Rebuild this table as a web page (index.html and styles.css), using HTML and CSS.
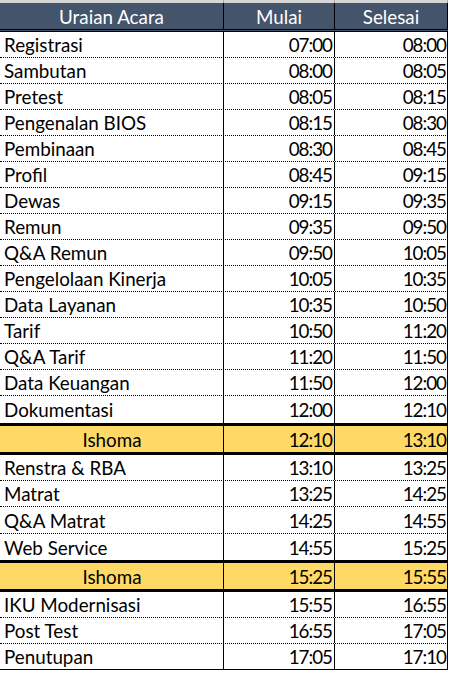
FILE: index.html
```html
<!DOCTYPE html>
<html>
<head>
<meta charset="utf-8">
<link rel="stylesheet" href="styles.css">
</head>
<body>
<div class="sheet">
  <div class="strip"><span></span><span></span><span></span></div>
  <div class="row head"><div class="c c1">Uraian Acara</div><div class="c c2">Mulai</div><div class="c c3">Selesai</div></div>
  <div class="row"><div class="c c1">Registrasi</div><div class="c c2">07:00</div><div class="c c3">08:00</div></div>
  <div class="row"><div class="c c1">Sambutan</div><div class="c c2">08:00</div><div class="c c3">08:05</div></div>
  <div class="row"><div class="c c1">Pretest</div><div class="c c2">08:05</div><div class="c c3">08:15</div></div>
  <div class="row"><div class="c c1">Pengenalan BIOS</div><div class="c c2">08:15</div><div class="c c3">08:30</div></div>
  <div class="row"><div class="c c1">Pembinaan</div><div class="c c2">08:30</div><div class="c c3">08:45</div></div>
  <div class="row"><div class="c c1">Profil</div><div class="c c2">08:45</div><div class="c c3">09:15</div></div>
  <div class="row"><div class="c c1">Dewas</div><div class="c c2">09:15</div><div class="c c3">09:35</div></div>
  <div class="row"><div class="c c1">Remun</div><div class="c c2">09:35</div><div class="c c3">09:50</div></div>
  <div class="row"><div class="c c1">Q&amp;A Remun</div><div class="c c2">09:50</div><div class="c c3">10:05</div></div>
  <div class="row"><div class="c c1">Pengelolaan Kinerja</div><div class="c c2">10:05</div><div class="c c3">10:35</div></div>
  <div class="row"><div class="c c1">Data Layanan</div><div class="c c2">10:35</div><div class="c c3">10:50</div></div>
  <div class="row"><div class="c c1">Tarif</div><div class="c c2">10:50</div><div class="c c3">11:20</div></div>
  <div class="row"><div class="c c1">Q&amp;A Tarif</div><div class="c c2">11:20</div><div class="c c3">11:50</div></div>
  <div class="row"><div class="c c1">Data Keuangan</div><div class="c c2">11:50</div><div class="c c3">12:00</div></div>
  <div class="row last tall"><div class="c c1">Dokumentasi</div><div class="c c2">12:00</div><div class="c c3">12:10</div></div>
  <div class="row brk"><div class="c c1">Ishoma</div><div class="c c2">12:10</div><div class="c c3">13:10</div></div>
  <div class="row"><div class="c c1">Renstra &amp; RBA</div><div class="c c2">13:10</div><div class="c c3">13:25</div></div>
  <div class="row"><div class="c c1">Matrat</div><div class="c c2">13:25</div><div class="c c3">14:25</div></div>
  <div class="row tall"><div class="c c1">Q&amp;A Matrat</div><div class="c c2">14:25</div><div class="c c3">14:55</div></div>
  <div class="row last"><div class="c c1">Web Service</div><div class="c c2">14:55</div><div class="c c3">15:25</div></div>
  <div class="row brk"><div class="c c1">Ishoma</div><div class="c c2">15:25</div><div class="c c3">15:55</div></div>
  <div class="row"><div class="c c1">IKU Modernisasi</div><div class="c c2">15:55</div><div class="c c3">16:55</div></div>
  <div class="row"><div class="c c1">Post Test</div><div class="c c2">16:55</div><div class="c c3">17:05</div></div>
  <div class="row end"><div class="c c1">Penutupan</div><div class="c c2">17:05</div><div class="c c3">17:10</div></div>
</div>
</body>
</html>
```

FILE: styles.css
```css
* { box-sizing: border-box; }
html, body { margin: 0; padding: 0; background: #ffffff; }
body { font-family: Lato, "Open Sans", sans-serif; font-size: 18.8px; color: #000; }
.sheet { width: 450px; display: flex; flex-direction: column; }
.strip { height: 3px; background: #d6d6d6; display: grid; grid-template-columns: 224px 111px 113px; width: 448px; }
.strip span { border-right: 1px solid #a6a6a6; }
.row { display: grid; grid-template-columns: 224px 111px 113px; width: 448px; height: 26px; border-bottom: 1px dotted #000; }
.row.tall { height: 27px; }
.c { border-right: 1px solid #000; padding: 0 3px 0 4px; display: flex; align-items: center; white-space: nowrap; }
.c2, .c3 { justify-content: flex-end; letter-spacing: -1px; padding-right: 2px; }
.c3 { padding-right: 1px; }
.head { height: 29px; background: #44546a; border-bottom: 3px double #000; color: #fff; }
.head .c { justify-content: center; padding: 0; letter-spacing: 0; }
.row.last { border-bottom: none; }
.row.brk { height: 32px; background: #ffd966; border-top: 3px solid #000; border-bottom: 3px solid #000; }
.row.brk .c1 { justify-content: center; }
.row.end { border-bottom: 1px solid #000; }
```
